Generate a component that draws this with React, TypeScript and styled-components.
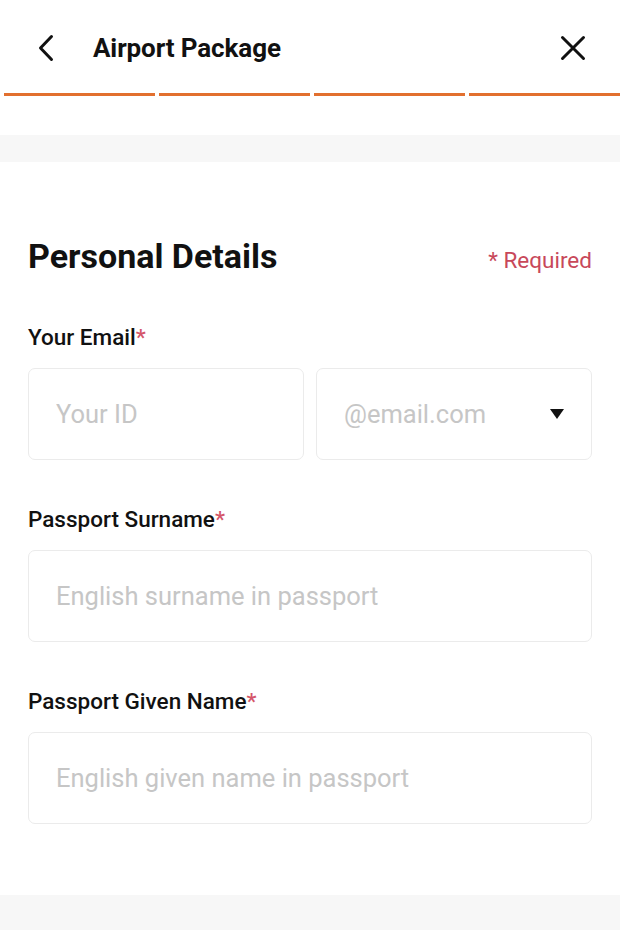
import * as React from 'react';
import styled, { createGlobalStyle } from 'styled-components';

const GlobalStyle = createGlobalStyle`
  html, body {
    margin: 0;
    padding: 0;
    background: #ffffff;
    font-family: Roboto, "Noto Sans", "Liberation Sans", sans-serif;
    color: #111111;
  }
`;

const Page = styled.div`
  width: 620px;
  min-height: 930px;
  display: flex;
  flex-direction: column;
  background: #ffffff;
`;

const Header = styled.header`
  height: 93px;
  display: flex;
  align-items: center;
  padding: 2px 34px 0 36px;
  box-sizing: border-box;
`;

const IconButton = styled.button<{ $w: number }>`
  width: ${p => p.$w}px;
  height: 28px;
  padding: 0;
  border: none;
  background: none;
  display: flex;
  align-items: center;
  justify-content: center;
  cursor: pointer;
`;

const Title = styled.h1`
  flex: 1;
  margin: 0 0 0 37px;
  font-size: 26px;
  font-weight: 700;
  letter-spacing: -0.1px;
`;

const Progress = styled.div`
  display: flex;
  gap: 4px;
  padding-left: 4px;
`;

const Step = styled.div<{ $done: boolean }>`
  flex: 1;
  height: 3px;
  background: ${p => (p.$done ? '#e2702f' : '#eeeeee')};
`;

const Band = styled.div<{ $top: number }>`
  height: 27px;
  margin-top: ${p => p.$top}px;
  background: #f7f7f7;
`;

const Card = styled.section`
  padding: 74px 28px 71px;
  display: flex;
  flex-direction: column;
`;

const HeadingRow = styled.div`
  display: flex;
  align-items: baseline;
  justify-content: space-between;
  margin-bottom: 48px;
`;

const Heading = styled.h2`
  margin: 0;
  font-size: 34px;
  line-height: 40px;
  font-weight: 700;
`;

const RequiredNote = styled.span`
  font-size: 22.5px;
  color: #c8485a;
`;

const Field = styled.div`
  display: flex;
  flex-direction: column;
  gap: 18px;
  & + & {
    margin-top: 46px;
  }
`;

const Label = styled.label`
  font-size: 22.5px;
  font-weight: 500;
  line-height: 26px;
`;

const Star = styled.span`
  color: #d4566a;
`;

const InputRow = styled.div`
  display: grid;
  grid-template-columns: 1fr 1fr;
  gap: 12px;
`;

const Box = styled.div`
  min-width: 0;
  height: 92px;
  box-sizing: border-box;
  border: 1px solid #ebebeb;
  border-radius: 7px;
  display: flex;
  align-items: center;
  justify-content: space-between;
  padding: 0 27px 0 27px;
`;

const Input = styled.input`
  flex: 1;
  min-width: 0;
  width: 100%;
  border: none;
  outline: none;
  background: transparent;
  font-family: inherit;
  font-size: 25.5px;
  color: #222;
  padding: 0;
  &::placeholder {
    color: #c6c6c6;
  }
`;

const Caret = styled.span`
  flex: none;
  width: 0;
  height: 0;
  margin-left: 8px;
  border-left: 7px solid transparent;
  border-right: 7px solid transparent;
  border-top: 10px solid #111;
`;

const Footer = styled.div`
  flex: 1;
  background: #f7f7f7;
`;

const BackIcon = () => (
  <svg width="18" height="28" viewBox="0 0 18 28" fill="none">
    <path d="M14.5 2.5 L3.5 14 L14.5 25.5" stroke="#111" strokeWidth="3" strokeLinecap="round" strokeLinejoin="round" />
  </svg>
);

const CloseIcon = () => (
  <svg width="26" height="26" viewBox="0 0 26 26" fill="none">
    <path d="M2.5 2.5 L23.5 23.5 M23.5 2.5 L2.5 23.5" stroke="#111" strokeWidth="3" strokeLinecap="round" />
  </svg>
);

interface FieldProps {
  label: string;
  placeholder: string;
}

const TextField: React.FC<FieldProps> = ({ label, placeholder }) => (
  <Field>
    <Label>
      {label}
      <Star>*</Star>
    </Label>
    <Box>
      <Input placeholder={placeholder} />
    </Box>
  </Field>
);

const App: React.FC = () => {
  return (
    <Page>
      <GlobalStyle />
      <Header>
        <IconButton $w={20} aria-label="Back">
          <BackIcon />
        </IconButton>
        <Title>Airport Package</Title>
        <IconButton $w={26} aria-label="Close">
          <CloseIcon />
        </IconButton>
      </Header>
      <Progress>
        {[0, 1, 2, 3].map(i => (
          <Step key={i} $done />
        ))}
      </Progress>
      <Band $top={39} />
      <Card>
        <HeadingRow>
          <Heading>Personal Details</Heading>
          <RequiredNote>* Required</RequiredNote>
        </HeadingRow>
        <Field>
          <Label>
            Your Email<Star>*</Star>
          </Label>
          <InputRow>
            <Box>
              <Input placeholder="Your ID" />
            </Box>
            <Box>
              <Input placeholder="@email.com" />
              <Caret />
            </Box>
          </InputRow>
        </Field>
        <TextField label="Passport Surname" placeholder="English surname in passport" />
        <TextField label="Passport Given Name" placeholder="English given name in passport" />
      </Card>
      <Footer />
    </Page>
  );
};

export default App;
